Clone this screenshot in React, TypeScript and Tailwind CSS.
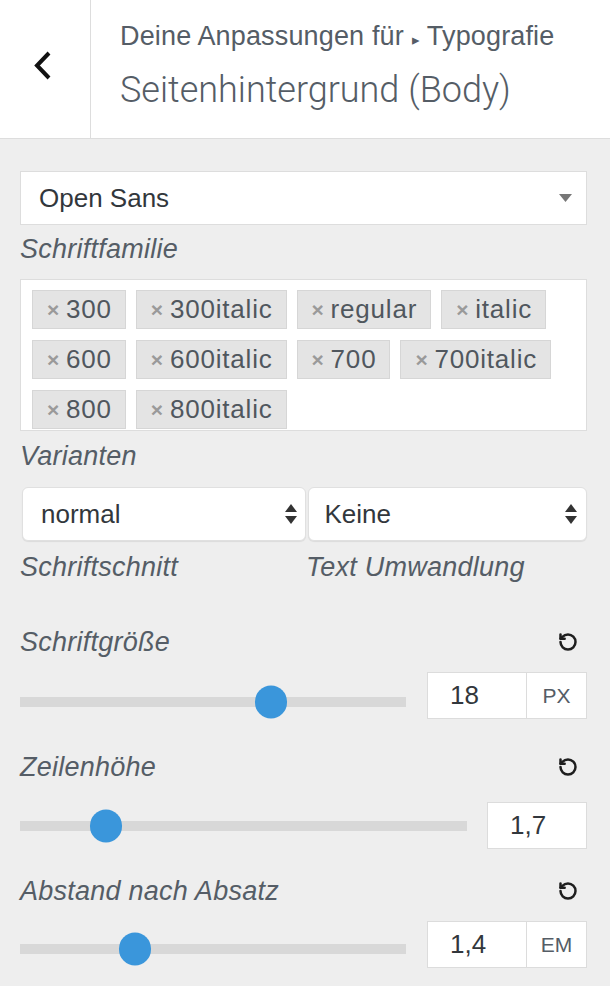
import { RotateCcw } from "lucide-react";

const variants = [
  "300",
  "300italic",
  "regular",
  "italic",
  "600",
  "600italic",
  "700",
  "700italic",
  "800",
  "800italic",
];

function Tag({ label }: { label: string }) {
  return (
    <span className="flex h-[39px] items-center border border-[#d6d6d6] bg-[#e4e4e4] pl-[14px] pr-[13px] text-[26px] tracking-[0.8px] text-[#50575e]">
      <span className="mr-[6px] text-[21px] font-bold text-[#9a9a9a]">×</span>
      {label}
    </span>
  );
}

function UpDown() {
  return (
    <svg width="14" height="24" viewBox="0 0 14 24" className="shrink-0">
      <path d="M7 2 L13 10 L1 10 Z" fill="#333" />
      <path d="M7 22 L13 14 L1 14 Z" fill="#333" />
    </svg>
  );
}

function Label({ children }: { children: React.ReactNode }) {
  return (
    <div className="h-[32px] text-[27px] italic leading-[32px] tracking-[0.25px] text-[#555d66]">
      {children}
    </div>
  );
}

function SliderRow({
  label,
  value,
  unit,
  pos,
  className,
  inputClass,
  trackClass,
}: {
  label: string;
  value: string;
  unit: string;
  pos: number;
  className: string;
  inputClass: string;
  trackClass: string;
}) {
  return (
    <div className={className}>
      <div className="flex items-center justify-between pr-[9px]">
        <Label>{label}</Label>
        <RotateCcw size={20} strokeWidth={3} className="text-[#1e1e1e]" />
      </div>
      <div className="mt-[14px] flex items-start">
        <div className={`relative h-[10px] flex-1 bg-[#d8d8d8] ${trackClass}`}>
          <div
            className="absolute top-1/2 h-[33px] w-[32px] -translate-x-1/2 -translate-y-1/2 rounded-full bg-[#3a96db]"
            style={{ left: `${pos}%` }}
          />
        </div>
        <div className={`flex h-[47px] border border-[#dcdcdc] bg-white ${inputClass}`}>
          <div className="flex w-[98px] items-center pl-[22px] text-[26px] text-[#32373c]">{value}</div>
          {unit && (
            <div className="flex w-[60px] items-center justify-center border-l border-[#dcdcdc] text-[21px] text-[#555d66]">
              {unit}
            </div>
          )}
        </div>
      </div>
    </div>
  );
}

export default function App() {
  return (
    <div className="h-[986px] w-[610px] overflow-hidden bg-[#eeeeee] font-['Liberation_Sans',Arial,sans-serif]">
      {/* header */}
      <div className="flex h-[139px] border-b border-[#dddddd] bg-white">
        <div className="flex w-[91px] items-center justify-center border-r border-[#dddddd] pb-[6px] pr-[4px]">
          <svg width="22" height="30" viewBox="0 0 22 30">
            <polyline points="17,2 5,14.5 17,27" fill="none" stroke="#111" strokeWidth="4" />
          </svg>
        </div>
        <div className="pl-[29px] pt-[21px]">
          <div className="text-[27px] leading-[30px] tracking-[0.15px] text-[#555d66]">
            Deine Anpassungen für <span className="text-[15px]">▸</span> Typografie
          </div>
          <div className="mt-[15px] font-['Roboto',sans-serif] text-[36px] font-light leading-[40px] text-[#555d66]">
            Seitenhintergrund (Body)
          </div>
        </div>
      </div>

      <div className="pl-[20px] pr-[23px]">
        {/* font family */}
        <div className="mt-[32px] flex h-[54px] items-center justify-between border border-[#dddddd] bg-white pl-[18px] pr-[14px]">
          <span className="text-[26px] text-[#32373c]">Open Sans</span>
          <svg width="13" height="8" viewBox="0 0 13 8">
            <path d="M0 0 L13 0 L6.5 8 Z" fill="#777" />
          </svg>
        </div>
        <div className="mt-[8px]">
          <Label>Schriftfamilie</Label>
        </div>

        {/* variants */}
        <div className="mt-[14px] h-[152px] overflow-hidden border border-[#dddddd] bg-white pl-[11px] pt-[10px]">
          <div className="flex flex-wrap gap-x-[10px] gap-y-[11px]">
            {variants.map((v) => (
              <Tag key={v} label={v} />
            ))}
          </div>
        </div>
        <div className="mt-[9px]">
          <Label>Varianten</Label>
        </div>

        {/* style + transform */}
        <div className="mt-[15px] flex gap-[2px] pl-[2px]">
          <div className="flex h-[54px] w-[284px] items-center justify-between rounded-[6px] border border-[#e0e0e0] bg-white pl-[18px] pr-[7px] shadow-[0_1px_1px_rgba(0,0,0,0.08)]">
            <span className="text-[26px] text-[#32373c]">normal</span>
            <UpDown />
          </div>
          <div className="flex h-[54px] w-[280px] items-center justify-between rounded-[6px] border border-[#e0e0e0] bg-white pl-[16px] pr-[8px] shadow-[0_1px_1px_rgba(0,0,0,0.08)]">
            <span className="text-[26px] text-[#32373c]">Keine</span>
            <UpDown />
          </div>
        </div>
        <div className="mt-[10px] flex">
          <div className="w-[286px]">
            <Label>Schriftschnitt</Label>
          </div>
          <Label>Text Umwandlung</Label>
        </div>

        {/* sliders */}
        <SliderRow
          label="Schriftgröße"
          value="18"
          unit="PX"
          pos={65}
          className="mt-[43px]"
          trackClass="mt-[25px]"
          inputClass="ml-[21px]"
        />
        <SliderRow
          label="Zeilenhöhe"
          value="1,7"
          unit=""
          pos={19.2}
          className="mt-[32px]"
          trackClass="mt-[24px]"
          inputClass="ml-[20px] mt-[5px]"
        />
        <SliderRow
          label="Abstand nach Absatz"
          value="1,4"
          unit="EM"
          pos={29.9}
          className="mt-[26px]"
          trackClass="mt-[23px]"
          inputClass="ml-[21px]"
        />
      </div>
    </div>
  );
}
